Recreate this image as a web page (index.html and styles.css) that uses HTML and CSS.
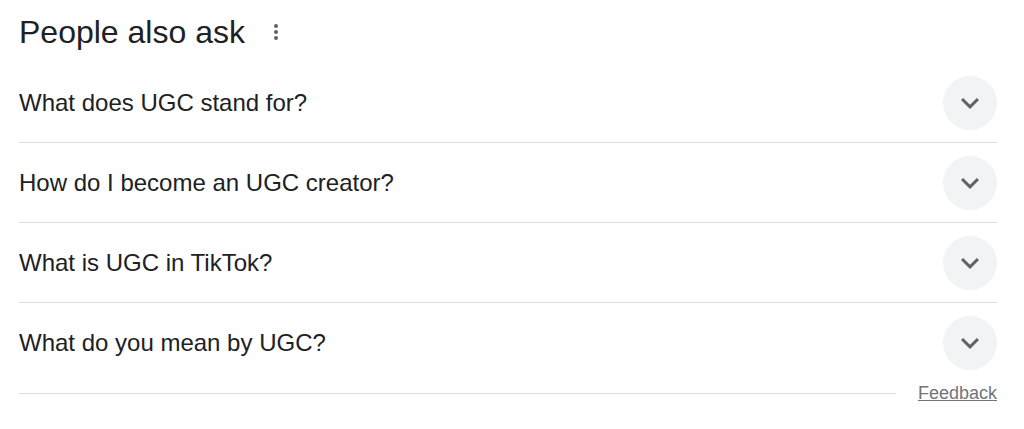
FILE: index.html
```html
<!DOCTYPE html>
<html>
<head>
<meta charset="utf-8">
<link rel="stylesheet" href="styles.css">
</head>
<body>
<div class="paa">
  <div class="paa-head">
    <h2 class="paa-title">People also ask</h2>
    <svg class="kebab" viewBox="0 0 24 24" width="24" height="24"><circle cx="12" cy="6" r="2"/><circle cx="12" cy="12" r="2"/><circle cx="12" cy="18" r="2"/></svg>
  </div>
  <div class="q-row"><span class="q-text">What does UGC stand for?</span><span class="q-btn"><svg viewBox="0 0 24 24" width="36" height="36"><path d="M16.59 8.59L12 13.17 7.41 8.59 6 10l6 6 6-6z"/></svg></span></div>
  <div class="q-row"><span class="q-text">How do I become an UGC creator?</span><span class="q-btn"><svg viewBox="0 0 24 24" width="36" height="36"><path d="M16.59 8.59L12 13.17 7.41 8.59 6 10l6 6 6-6z"/></svg></span></div>
  <div class="q-row"><span class="q-text">What is UGC in TikTok?</span><span class="q-btn"><svg viewBox="0 0 24 24" width="36" height="36"><path d="M16.59 8.59L12 13.17 7.41 8.59 6 10l6 6 6-6z"/></svg></span></div>
  <div class="q-row q-last"><span class="q-text">What do you mean by UGC?</span><span class="q-btn"><svg viewBox="0 0 24 24" width="36" height="36"><path d="M16.59 8.59L12 13.17 7.41 8.59 6 10l6 6 6-6z"/></svg></span></div>
  <div class="feedback-row">
    <div class="feedback-line"></div>
    <a class="feedback" href="#">Feedback</a>
  </div>
</div>
</body>
</html>
```
FILE: styles.css
```css
html, body {
  margin: 0;
  padding: 0;
  background: #fff;
}
body {
  font-family: "Liberation Sans", Arial, sans-serif;
  color: #202124;
}
.paa {
  width: 978px;
  margin-left: 19px;
}
.paa-head {
  display: flex;
  align-items: center;
  padding-top: 12px;
  padding-bottom: 11px;
}
.paa-title {
  margin: 0;
  font-weight: normal;
  font-size: 32px;
  line-height: 40px;
  color: #202124;
}
.kebab {
  margin-left: 19px;
  fill: #5f6368;
}
.q-row {
  display: flex;
  align-items: center;
  justify-content: space-between;
  height: 79px;
  border-bottom: 1px solid #dadce0;
}
.q-row.q-last {
  border-bottom: none;
}
.q-text {
  font-size: 24px;
  line-height: 30px;
}
.q-btn {
  width: 54px;
  height: 54px;
  border-radius: 50%;
  background: #f1f3f4;
  display: flex;
  align-items: center;
  justify-content: center;
}
.q-btn svg {
  fill: #5f6368;
}
.feedback-row {
  display: flex;
  align-items: center;
  height: 22px;
}
.feedback-line {
  flex: 1;
  border-top: 1px solid #dadce0;
}
.feedback {
  margin-left: 22px;
  font-size: 18px;
  line-height: 22px;
  color: #70757a;
  text-decoration: underline;
}
```
